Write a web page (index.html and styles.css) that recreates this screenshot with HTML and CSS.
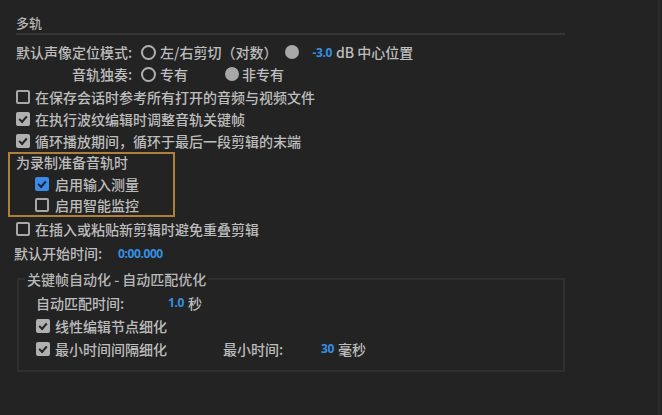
FILE: index.html
```html
<!DOCTYPE html>
<html lang="zh-CN">
<head>
	<meta charset="UTF-8">
	<title>多轨</title>
	<link rel="stylesheet" href="styles.css">
</head>
<body>
	<div class="page">
		<div class="title">多轨</div>

		<div class="row">
			<span class="label">默认声像定位模式:</span>
			<span class="radio"></span><span class="rtext">左/右剪切（对数）</span>
			<span class="radio on gap"></span><span class="num">-3.0</span><span class="rtext unit">dB 中心位置</span>
		</div>
		<div class="row">
			<span class="label solo">音轨独奏:</span>
			<span class="radio"></span><span class="rtext">专有</span>
			<span class="radio on gap2"></span><span class="rtext">非专有</span>
		</div>

		<div class="row cb-row"><span class="cb"></span>在保存会话时参考所有打开的音频与视频文件</div>
		<div class="row cb-row"><span class="cb on"></span>在执行波纹编辑时调整音轨关键帧</div>
		<div class="row cb-row"><span class="cb on"></span>循环播放期间，循环于最后一段剪辑的末端</div>

		<div class="focus">
			<div class="focus-title">为录制准备音轨时</div>
			<div class="focus-row"><span class="cb blue"></span>启用输入测量</div>
			<div class="focus-row"><span class="cb"></span>启用智能监控</div>
		</div>

		<div class="row cb-row"><span class="cb"></span>在插入或粘贴新剪辑时避免重叠剪辑</div>

		<div class="row start">
			<span class="start-label">默认开始时间:</span><span class="num">0:00.000</span>
		</div>

		<fieldset class="group">
			<legend>关键帧自动化 - 自动匹配优化</legend>
			<div class="grow">
				<span class="glabel">自动匹配时间:</span><span class="num">1.0</span><span class="unit">秒</span>
			</div>
			<div class="grow"><span class="cb on"></span>线性编辑节点细化</div>
			<div class="grow">
				<span class="cb on"></span><span class="glabel2">最小时间间隔细化</span>
				<span class="glabel3">最小时间:</span><span class="num">30</span><span class="unit">毫秒</span>
			</div>
		</fieldset>
	</div>
</body>
</html>
```

FILE: styles.css
```css
html, body {
	margin: 0;
	background: #232323;
}

body {
	width: 662px;
	height: 415px;
	overflow: hidden;
	font-family: "Noto Sans CJK SC", "Noto Sans", sans-serif;
	font-size: 14px;
	font-weight: 500;
	color: #bdbdbd;
}

.page {
	width: 660px;
	height: 415px;
	border-right: 2px solid #2c2c2c;
	box-sizing: border-box;
	padding-top: 13px;
}

.title {
	margin-left: 16px;
	width: 549px;
	height: 20px;
	line-height: 20px;
	font-size: 13px;
	color: #b4b4b4;
	border-bottom: 2px solid #363636;
	margin-bottom: 6px;
}

.row {
	display: flex;
	align-items: center;
	height: 22px;
	padding-left: 16px;
	white-space: nowrap;
}

.label { width: 125px; }
.solo { padding-left: 56px; box-sizing: border-box; }

.radio {
	width: 15px;
	height: 15px;
	box-sizing: border-box;
	border: 2px solid #b0b0b0;
	border-radius: 50%;
	margin-right: 4px;
	flex: none;
}

.radio.on {
	width: 14px;
	height: 14px;
	background: #a8a8a8;
	border-color: #a8a8a8;
}

.gap { margin-left: 8px; margin-right: 13px; }
.gap2 { margin-left: 37px; margin-right: 3px; }

.num {
	font-family: "Open Sans", sans-serif;
	font-size: 12px;
	font-weight: 700;
	color: #3590e0;
	letter-spacing: -0.4px;
}

.unit { margin-left: 4px; }

.cb {
	width: 14px;
	height: 14px;
	box-sizing: border-box;
	border: 2px solid #a8a8a8;
	border-radius: 2px;
	margin-right: 5px;
	flex: none;
	position: relative;
}

.cb.on {
	background: #b0b0b0;
	border-color: #b0b0b0;
}

.cb.blue {
	background: #3b8ae6;
	border-color: #3b8ae6;
}

.cb.on::after, .cb.blue::after {
	content: "";
	position: absolute;
	top: 2px;
	left: 1px;
	width: 6px;
	height: 3px;
	border-left: 2px solid #262626;
	border-bottom: 2px solid #262626;
	transform: rotate(-48deg);
}

.cb.blue::after {
	border-color: #17243d;
}

.row.cb-row:nth-of-type(4) { margin-top: 1px; }

.focus {
	margin: 0 0 1px 8px;
	width: 167px;
	height: 65px;
	box-sizing: border-box;
	border: 2px solid #b07f3c;
	padding-left: 6px;
}

.focus-title {
	height: 19px;
	line-height: 17px;
}

.focus-row {
	display: flex;
	align-items: center;
	height: 21px;
	padding-left: 19px;
}

.focus-row .cb { margin-right: 6px; }

.start {
	margin-top: 2px;
	padding-left: 14px;
}

.start-label { width: 104px; }

.group {
	margin: 6px 0 0 17px;
	width: 548px;
	box-sizing: border-box;
	border: 2px solid #2f2f2f;
	padding: 0 0 10px 17px;
}

.group legend {
	padding: 0 2px;
	margin-left: -11px;
	height: 18px;
	line-height: 18px;
	color: #b8b8b8;
}

.grow {
	display: flex;
	align-items: center;
	height: 23px;
	white-space: nowrap;
}

.grow:first-of-type { margin-top: 3px; }

.glabel { width: 132px; }
.glabel2 { width: 168px; }
.glabel3 { width: 98px; }
```
